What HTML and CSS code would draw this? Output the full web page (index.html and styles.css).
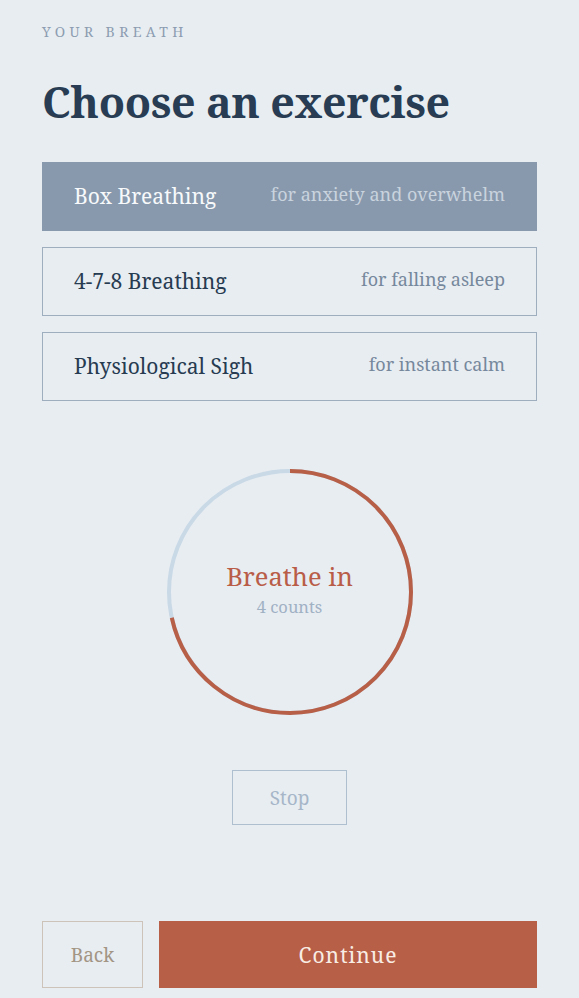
FILE: index.html
```html
<!DOCTYPE html>
<html lang="en">
    <head>
        <meta charset="UTF-8" />
        <meta name="viewport" content="width=device-width, initial-scale=1.0" />
        <title>Your Breath</title>
        <link rel="stylesheet" href="styles.css">
    </head>
    <body>
        <div class="page">
            <p class="eyebrow">YOUR BREATH</p>
            <h1 class="title">Choose an exercise</h1>

            <!-- exercise list -->
            <div class="options">
                <div class="option active">
                    <span class="name">Box Breathing</span>
                    <span class="hint">for anxiety and overwhelm</span>
                </div>
                <div class="option">
                    <span class="name">4-7-8 Breathing</span>
                    <span class="hint">for falling asleep</span>
                </div>
                <div class="option">
                    <span class="name">Physiological Sigh</span>
                    <span class="hint">for instant calm</span>
                </div>
            </div>

            <!-- breathing ring -->
            <div class="ring">
                <svg width="250" height="250" viewBox="0 0 250 250">
                    <circle class="track" cx="125" cy="125" r="121" />
                    <circle class="progress" cx="125" cy="125" r="121"
                        stroke-dasharray="544 760" transform="rotate(-90 125 125)" />
                </svg>
                <div class="ring-text">
                    <div class="phase">Breathe in</div>
                    <div class="counts">4 counts</div>
                </div>
            </div>

            <button class="stop">Stop</button>

            <div class="footer">
                <button class="back">Back</button>
                <button class="continue">Continue</button>
            </div>
        </div>
    </body>
</html>
```

FILE: styles.css
```css
* {
    margin: 0;
    padding: 0;
    box-sizing: border-box;
}
body {
    background: #e8edf2;
    font-family: "Noto Serif", "DejaVu Serif", "Liberation Serif", serif;
    color: #2a3e54;
}
.page {
    min-height: 998px;
    padding: 24px 42px 10px;
    display: flex;
    flex-direction: column;
}
.eyebrow {
    font-size: 14px;
    letter-spacing: 4.4px;
    color: #8d9db1;
    line-height: 16px;
}
.title {
    margin-top: 34px;
    font-size: 43px;
    letter-spacing: -0.4px;
    line-height: 56px;
    font-weight: 700;
    color: #283d53;
}
.options {
    margin-top: 32px;
    display: flex;
    flex-direction: column;
    gap: 16px;
}
.option {
    height: 69px;
    padding: 0 31px;
    border: 1px solid #9eaebf;
    display: flex;
    align-items: center;
    justify-content: space-between;
    .name {
        font-size: 21px;
        color: #273b51;
        padding-bottom: 2px;
    }
    .hint {
        font-size: 18px;
        color: #76889c;
        padding-bottom: 6px;
    }
}
.option.active {
    background: #8899ad;
    border-color: #8899ad;
    .name {
        color: #f7f9fb;
    }
    .hint {
        color: #c9d3de;
    }
}
.ring {
    margin: 66px auto 0;
    width: 250px;
    height: 250px;
    position: relative;
    circle {
        fill: none;
        stroke-width: 4;
    }
    .track {
        stroke: #c9d9e6;
    }
    .progress {
        stroke: #b85f48;
    }
}
.ring-text {
    position: absolute;
    inset: 0;
    display: flex;
    flex-direction: column;
    align-items: center;
    justify-content: center;
    padding-bottom: 6px;
}
.phase {
    font-size: 25.5px;
    color: #b95d48;
    line-height: 32px;
}
.counts {
    margin-top: 4px;
    font-size: 16.5px;
    color: #a0b1c4;
    line-height: 22px;
}
button {
    font-family: inherit;
    background: none;
    cursor: pointer;
}
.stop {
    margin: 53px auto 0;
    width: 115px;
    height: 55px;
    border: 1px solid #aebfd0;
    font-size: 19px;
    color: #a6b6c8;
}
.footer {
    margin-top: auto;
    display: flex;
    gap: 16px;
}
.back {
    width: 101px;
    height: 67px;
    border: 1px solid #cdc3b8;
    font-size: 19px;
    color: #a39584;
}
.continue {
    flex: 1;
    height: 67px;
    border: none;
    background: #b85f48;
    color: #f8ede4;
    font-size: 21px;
    letter-spacing: 1px;
}
```
